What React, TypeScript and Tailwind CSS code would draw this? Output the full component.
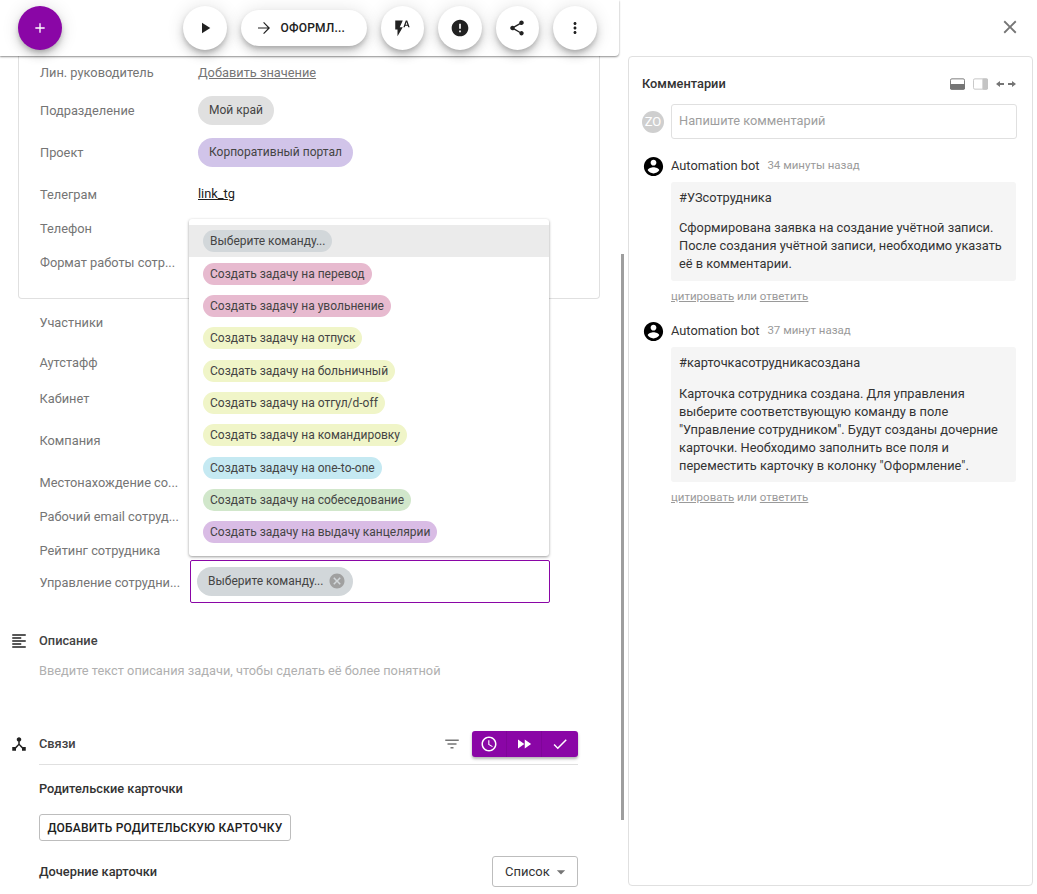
import type { ReactNode } from "react";

const P = {
  play: "M8 5v14l11-7z",
  flash: "M3 2v12h3v9l7-12H9l4-9H3zm16 0h-2l-3.2 9h1.9l.7-2h3.2l.7 2h1.9L19 2zm-2.15 5.65L18 4l1.15 3.65h-2.3z",
  error: "M12 2C6.48 2 2 6.48 2 12s4.48 10 10 10 10-4.48 10-10S17.52 2 12 2zm1 15h-2v-2h2v2zm0-4h-2V7h2v6z",
  share: "M18 16.08c-.76 0-1.44.3-1.96.77L8.91 12.7c.05-.23.09-.46.09-.7s-.04-.47-.09-.7l7.05-4.11c.54.5 1.25.81 2.04.81 1.66 0 3-1.34 3-3s-1.34-3-3-3-3 1.34-3 3c0 .24.04.47.09.7L8.04 9.81C7.5 9.31 6.79 9 6 9c-1.66 0-3 1.34-3 3s1.34 3 3 3c.79 0 1.5-.31 2.04-.81l7.12 4.16c-.05.21-.08.43-.08.65 0 1.61 1.31 2.92 2.92 2.92 1.61 0 2.92-1.31 2.92-2.92s-1.31-2.92-2.92-2.92z",
  more: "M12 8c1.1 0 2-.9 2-2s-.9-2-2-2-2 .9-2 2 .9 2 2 2zm0 2c-1.1 0-2 .9-2 2s.9 2 2 2 2-.9 2-2-.9-2-2-2zm0 6c-1.1 0-2 .9-2 2s.9 2 2 2 2-.9 2-2-.9-2-2-2z",
  add: "M19 13h-6v6h-2v-6H5v-2h6V5h2v6h6v2z",
  arrow: "M12 4l-1.1 1.1 6.1 6.1H4v1.6h13l-6.1 6.1L12 20l8-8z",
  close: "M19 6.41L17.59 5 12 10.59 6.41 5 5 6.41 10.59 12 5 17.59 6.41 19 12 13.41 17.59 19 19 17.59 13.41 12z",
  account: "M12 2C6.48 2 2 6.48 2 12s4.48 10 10 10 10-4.48 10-10S17.52 2 12 2zm0 3c1.66 0 3 1.34 3 3s-1.34 3-3 3-3-1.34-3-3 1.34-3 3-3zm0 14.2c-2.5 0-4.71-1.28-6-3.22.03-1.99 4-3.08 6-3.08 1.99 0 5.97 1.09 6 3.08-1.29 1.94-3.5 3.22-6 3.22z",
  cancel: "M12 2C6.47 2 2 6.47 2 12s4.47 10 10 10 10-4.47 10-10S17.53 2 12 2zm5 13.59L15.59 17 12 13.41 8.41 17 7 15.59 10.59 12 7 8.41 8.41 7 12 10.59 15.59 7 17 8.41 13.41 12 17 15.59z",
  notes: "M3 21h18v-2H3v2zm0-4h12v-2H3v2zm0-4h18v-2H3v2zm0-4h12V7H3v2zm0-6v2h18V3H3z",
  hub: "M17 16l-4-4V8.82C14.16 8.4 15 7.3 15 6c0-1.66-1.34-3-3-3S9 4.34 9 6c0 1.3.84 2.4 2 2.82V12l-4 4H3v5h5v-3.05l4-4.2 4 4.2V21h5v-5h-4z",
  filter: "M10 18h4v-2h-4v2zM3 6v2h18V6H3zm3 7h12v-2H6v2z",
  clock: "M11.99 2C6.47 2 2 6.48 2 12s4.47 10 9.99 10C17.52 22 22 17.52 22 12S17.52 2 11.99 2zM12 20c-4.42 0-8-3.58-8-8s3.58-8 8-8 8 3.58 8 8-3.58 8-8 8zm.5-13H11v6l5.25 3.15.75-1.23-4.5-2.67z",
  ff: "M4 18l8.5-6L4 6v12zm9-12v12l8.5-6L13 6z",
  check: "M9 16.17L4.83 12l-1.42 1.41L9 19 21 7l-1.41-1.41z",
  drop: "M7 10l5 5 5-5z",
};

const raised =
  "shadow-[0_3px_5px_-1px_rgba(0,0,0,0.2),0_6px_10px_0_rgba(0,0,0,0.14),0_1px_18px_0_rgba(0,0,0,0.12)]";

function Icon({ d, className }: { d: string; className: string }) {
  return (
    <svg viewBox="0 0 24 24" fill="currentColor" className={className}>
      <path d={d} />
    </svg>
  );
}

function RoundBtn({ children }: { children: ReactNode }) {
  return (
    <button
      type="button"
      className={`flex h-11 w-[43.5px] items-center justify-center rounded-full bg-white text-[#212121] ${raised}`}
    >
      {children}
    </button>
  );
}

function Chip({ children, color }: { children: ReactNode; color: string }) {
  return (
    <span className={`inline-flex h-[29px] items-center rounded-full px-[11px] text-[12px] text-[#444] ${color}`}>
      {children}
    </span>
  );
}

function Row({ label, h, children }: { label: string; h: string; children?: ReactNode }) {
  return (
    <div className={`flex items-center ${h}`}>
      <div className="w-[141px] whitespace-nowrap text-[12.8px] text-[#757575]">{label}</div>
      {children}
    </div>
  );
}

const options = [
  { text: "Выберите команду...", color: "bg-[#d2d7da]" },
  { text: "Создать задачу на перевод", color: "bg-[#e7bacf]" },
  { text: "Создать задачу на увольнение", color: "bg-[#e7bacf]" },
  { text: "Создать задачу на отпуск", color: "bg-[#f0f5c8]" },
  { text: "Создать задачу на больничный", color: "bg-[#f0f5c8]" },
  { text: "Создать задачу на отгул/d-off", color: "bg-[#f0f5c8]" },
  { text: "Создать задачу на командировку", color: "bg-[#f0f5c8]" },
  { text: "Создать задачу на one-to-one", color: "bg-[#c5e9f2]" },
  { text: "Создать задачу на собеседование", color: "bg-[#d1e7cb]" },
  { text: "Создать задачу на выдачу канцелярии", color: "bg-[#d9bce5]" },
];

function Comment({ time, tag, lines, first }: { time: string; tag: string; lines: string[]; first: boolean }) {
  return (
    <div className={first ? "mt-[18px]" : "mt-[19px]"}>
      <div className="flex h-[19px] items-center">
        <div className="flex w-[29px] justify-start">
          <Icon d={P.account} className="h-[23px] w-[23px] text-black" />
        </div>
        <span className="pb-[2px] text-[12.8px] text-[#333]">Automation bot</span>
        <span className="ml-2 pb-[2px] text-[11.5px] text-[#9a9a9a]">{time}</span>
      </div>
      <div
        className={`ml-[29px] mt-[6px] w-[345px] rounded-[3px] bg-[#f5f5f5] px-2 pt-[7px] text-[12.8px] leading-[18px] text-[#333] ${
          first ? "pb-[8px]" : "pb-[7px]"
        }`}
      >
        <p>{tag}</p>
        <p className={first ? "mt-[12px]" : "mt-[13px]"}>
          {lines.map((l) => (
            <span key={l} className="block">
              {l}
            </span>
          ))}
        </p>
      </div>
      <div className="ml-[29px] mt-[8px] text-[11.5px] leading-[14px] text-[#9a9a9a]">
        <span className="underline">цитировать</span> или <span className="underline">ответить</span>
      </div>
    </div>
  );
}

export default function App() {
  return (
    <div className="relative flex h-[894px] w-[1037px] overflow-hidden bg-white font-['Roboto',sans-serif]">
      {/* левая колонка */}
      <div className="relative w-[622px] shrink-0">
        <header className="relative z-20 flex h-[56px] w-[619px] items-center rounded-br-[4px] bg-white pl-[18px] shadow-[0_1px_2px_rgba(0,0,0,0.45)]">
          <button
            type="button"
            className={`flex h-11 w-[43.5px] items-center justify-center rounded-full bg-[#8a06a6] text-white ${raised}`}
          >
            <Icon d={P.add} className="h-4 w-4" />
          </button>
          <div className="ml-[121.5px] flex items-center gap-[14px]">
            <RoundBtn>
              <Icon d={P.play} className="h-[18px] w-[18px]" />
            </RoundBtn>
            <button
              type="button"
              className={`flex h-9 w-[126px] items-center rounded-full bg-white pl-[14px] text-[12px] font-medium tracking-[0.2px] text-[#212121] ${raised}`}
            >
              <Icon d={P.arrow} className="h-[18px] w-[18px]" />
              <span className="ml-[8px]">ОФОРМЛ...</span>
            </button>
            <RoundBtn>
              <Icon d={P.flash} className="h-[18px] w-[18px]" />
            </RoundBtn>
            <RoundBtn>
              <Icon d={P.error} className="h-5 w-5" />
            </RoundBtn>
            <RoundBtn>
              <Icon d={P.share} className="h-[18px] w-[18px]" />
            </RoundBtn>
            <RoundBtn>
              <Icon d={P.more} className="h-[18px] w-[18px]" />
            </RoundBtn>
          </div>
        </header>

        <div className="mx-[18px] w-[582px] rounded-b-[4px] border-x border-b border-[#e0e0e0] pb-[15px] pl-[21px]">
          <Row label="Лин. руководитель" h="h-[34px]">
            <span className="ml-[17px] text-[12.8px] text-[#757575] underline">Добавить значение</span>
          </Row>
          <div className="h-px" />
          <Row label="Подразделение" h="h-[40px]">
            <span className="mb-[2px] ml-[17px]">
              <Chip color="bg-[#e0e0e0]">Мой край</Chip>
            </span>
          </Row>
          <Row label="Проект" h="h-[44px]">
            <span className="mb-[2px] ml-[17px]">
              <Chip color="bg-[#d1c4e9]">Корпоративный портал</Chip>
            </span>
          </Row>
          <Row label="Телеграм" h="h-[40px]">
            <span className="mb-[2px] ml-[17px] text-[12.8px] text-[#212121] underline">link_tg</span>
          </Row>
          <Row label="Телефон" h="h-[28px]" />
          <Row label="Формат работы сотр..." h="h-[40px]" />
        </div>

        <div className="pl-[39.5px]">
          <Row label="Участники" h="h-[48px]" />
          <Row label="Аутстафф" h="h-[32px]" />
          <Row label="Кабинет" h="h-[40px]" />
          <Row label="Компания" h="h-[44px]" />
          <Row label="Местонахождение со..." h="h-[40px]" />
          <Row label="Рабочий email сотруд..." h="h-[28px]" />
          <Row label="Рейтинг сотрудника" h="h-[40px]" />
          <Row label="Управление сотрудни..." h="h-[24px]">
            <div className="mb-[4px] ml-[9.5px] flex h-[43px] w-[360px] shrink-0 items-center rounded-[2px] border border-[#8a06a6] bg-white pl-[6px]">
              <span className="inline-flex h-[29px] items-center rounded-full bg-[#d2d7da] pl-[11px] pr-[7px] text-[12px] text-[#444]">
                Выберите команду...
                <Icon d={P.cancel} className="ml-[5px] h-[18px] w-[18px] text-[#a0a0a0]" />
              </span>
            </div>
          </Row>
        </div>

        <section className="mt-[36px]">
          <div className="flex h-[20px] items-center pl-[10px]">
            <Icon d={P.notes} className="h-[18px] w-[18px] text-[#212121]" />
            <span className="ml-[11px] text-[12.8px] font-medium text-[#424242]">Описание</span>
          </div>
          <p className="ml-[39px] mt-[10px] text-[12.8px] leading-[20px] text-[#b0b0b0]">
            Введите текст описания задачи, чтобы сделать её более понятной
          </p>
        </section>

        <section className="ml-[10px] mt-[50px] w-[568px]">
          <div className="flex h-[26px] items-center">
            <Icon d={P.hub} className="h-[18px] w-[18px] text-[#212121]" />
            <span className="ml-[11px] text-[12.8px] font-medium text-[#424242]">Связи</span>
            <Icon d={P.filter} className="ml-auto h-[18px] w-[18px] text-[#757575]" />
            <div className="ml-[11px] flex h-[26px] w-[106px] overflow-hidden rounded-[3px] bg-[#8a06a6] text-white shadow-[0_2px_3px_rgba(0,0,0,0.3)]">
              <span className="flex w-[35px] items-center justify-center border-r border-[#7f0599]">
                <Icon d={P.clock} className="h-[18px] w-[18px]" />
              </span>
              <span className="flex w-[35px] items-center justify-center border-r border-[#7f0599]">
                <Icon d={P.ff} className="h-[18px] w-[18px]" />
              </span>
              <span className="flex flex-1 items-center justify-center">
                <Icon d={P.check} className="h-[18px] w-[18px]" />
              </span>
            </div>
          </div>
          <div className="ml-[29px] mt-[7px] border-t border-[#e0e0e0]">
            <div className="mt-[15px] text-[12.8px] font-medium leading-[17px] text-[#333]">Родительские карточки</div>
            <button
              type="button"
              className="mt-[17px] flex h-[27px] w-[252px] items-center justify-center rounded-[3px] border border-[#bdbdbd] text-[12px] font-medium tracking-[0.2px] text-[#212121]"
            >
              ДОБАВИТЬ РОДИТЕЛЬСКУЮ КАРТОЧКУ
            </button>
            <div className="mt-[15px] flex h-[31px] items-center justify-between">
              <span className="text-[12.8px] font-medium text-[#333]">Дочерние карточки</span>
              <span className="flex h-[31px] w-[86px] items-center rounded-[3px] border border-[#bdbdbd] pl-3 text-[13px] text-[#333]">
                Список
                <Icon d={P.drop} className="ml-[1px] h-5 w-5 text-[#757575]" />
              </span>
            </div>
          </div>
        </section>

        {/* выпадающий список команд */}
        <div className="absolute left-[189px] top-[219px] z-10 h-[337px] w-[360px] rounded-[3px] bg-white pt-[6px] shadow-[0_1px_3px_rgba(0,0,0,0.4)]">
          {options.map((o, i) => (
            <div
              key={o.text}
              className={`flex h-[32.35px] items-center pl-[14px] ${i === 0 ? "bg-[#ebebeb]" : ""}`}
            >
              <span className={`inline-flex h-[22px] items-center rounded-full px-[7px] text-[12px] text-[#444] ${o.color}`}>
                {o.text}
              </span>
            </div>
          ))}
        </div>

        {/* полоса прокрутки */}
        <div className="absolute left-[621px] top-[254px] h-[566px] w-[3px] bg-[#9e9e9e]" />
      </div>

      {/* комментарии */}
      <div className="relative flex-1">
        <div className="flex h-[56px] items-center justify-end pb-[2px] pr-[16px]">
          <Icon d={P.close} className="h-[22px] w-[22px] text-[#757575]" />
        </div>
        <div className="ml-[6px] h-[830px] w-[405px] rounded-[4px] border border-[#e0e0e0] px-[13px]">
          <div className="mt-[18px] flex h-[18px] items-center">
            <span className="text-[12.8px] font-medium text-[#333]">Комментарии</span>
            <div className="ml-auto mr-[3px] flex items-center gap-[8px]">
              <svg viewBox="0 0 16 12" className="h-[12px] w-[15px]">
                <rect x="0.5" y="0.5" width="15" height="11" rx="1.5" fill="#fff" stroke="#757575" />
                <rect x="0" y="6" width="16" height="6" rx="1.5" fill="#757575" />
              </svg>
              <svg viewBox="0 0 16 12" className="h-[12px] w-[15px]">
                <rect x="0.5" y="0.5" width="15" height="11" rx="1.5" fill="#fff" stroke="#c4c4c4" />
                <rect x="10" y="0" width="6" height="12" rx="1.5" fill="#c4c4c4" />
              </svg>
              <svg viewBox="0 0 20 8" className="h-[8px] w-[20px]">
                <path d="M0 4l4-3v2h4v2H4v2zM20 4l-4-3v2h-4v2h4v2z" fill="#757575" />
              </svg>
            </div>
          </div>
          <div className="mt-[11px] flex items-center">
            <div className="flex h-[22px] w-[22px] items-center justify-center rounded-full bg-[#cfcfcf] text-[13px] text-white">
              ZO
            </div>
            <div className="ml-[7px] flex h-[35px] w-[346px] items-center rounded-[3px] border border-[#e0e0e0] pb-[2px] pl-[7px] text-[12.8px] text-[#9e9e9e]">
              Напишите комментарий
            </div>
          </div>
          <Comment
            first
            time="34 минуты назад"
            tag="#УЗсотрудника"
            lines={[
              "Сформирована заявка на создание учётной записи.",
              "После создания учётной записи, необходимо указать",
              "её в комментарии.",
            ]}
          />
          <Comment
            first={false}
            time="37 минут назад"
            tag="#карточкасотрудникасоздана"
            lines={[
              "Карточка сотрудника создана. Для управления",
              "выберите соответствующую команду в поле",
              '"Управление сотрудником". Будут созданы дочерние',
              "карточки. Необходимо заполнить все поля и",
              'переместить карточку в колонку "Оформление".',
            ]}
          />
        </div>
      </div>
    </div>
  );
}
